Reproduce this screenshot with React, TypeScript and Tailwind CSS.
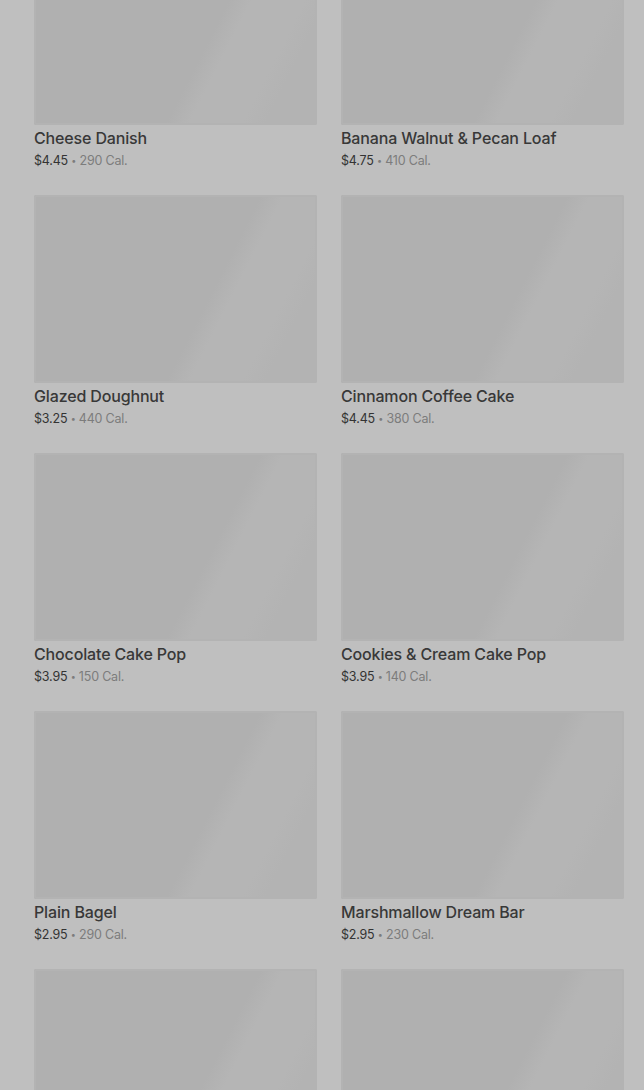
type Item = {
  name: string;
  price: string;
  cal: string;
};

const items: Item[] = [
  { name: "Cheese Danish", price: "$4.45", cal: "290 Cal." },
  { name: "Banana Walnut & Pecan Loaf", price: "$4.75", cal: "410 Cal." },
  { name: "Glazed Doughnut", price: "$3.25", cal: "440 Cal." },
  { name: "Cinnamon Coffee Cake", price: "$4.45", cal: "380 Cal." },
  { name: "Chocolate Cake Pop", price: "$3.95", cal: "150 Cal." },
  { name: "Cookies & Cream Cake Pop", price: "$3.95", cal: "140 Cal." },
  { name: "Plain Bagel", price: "$2.95", cal: "290 Cal." },
  { name: "Marshmallow Dream Bar", price: "$2.95", cal: "230 Cal." },
  { name: "", price: "", cal: "" },
  { name: "", price: "", cal: "" },
];

function ProductCard({ item }: { item: Item }) {
  return (
    <div className="flex flex-col">
      <div className="h-[188px] w-full rounded-[2px] bg-[linear-gradient(117deg,#b0b0b0_0%,#b0b0b0_60%,#b5b5b5_66%,#b5b5b5_80%,#b3b3b3_86%,#b3b3b3_100%)] shadow-[inset_0_0_0_2px_#b3b3b3]" />
      {item.name && (
        <>
          <h3 className="mt-[2px] text-[16px] leading-[22px] font-medium tracking-[-0.15px] text-[#383838]">
            {item.name}
          </h3>
          <p className="mt-[2px] h-[20px] text-[12.5px] leading-[20px] tracking-[-0.2px] text-[#7c7c7c]">
            <span className="text-[#333333]">{item.price}</span>{" "}
            <span className="relative -top-[1px] text-[9px] leading-none">•</span> {item.cal}
          </p>
        </>
      )}
    </div>
  );
}

export default function App() {
  return (
    <div className="h-[1090px] overflow-hidden bg-[#bfbfbf] font-['Inter',sans-serif]">
      <div className="-mt-[63px] grid grid-cols-2 gap-x-6 gap-y-6 pl-[34px] pr-[20px]">
        {items.map((item, i) => (
          <ProductCard key={i} item={item} />
        ))}
      </div>
    </div>
  );
}
